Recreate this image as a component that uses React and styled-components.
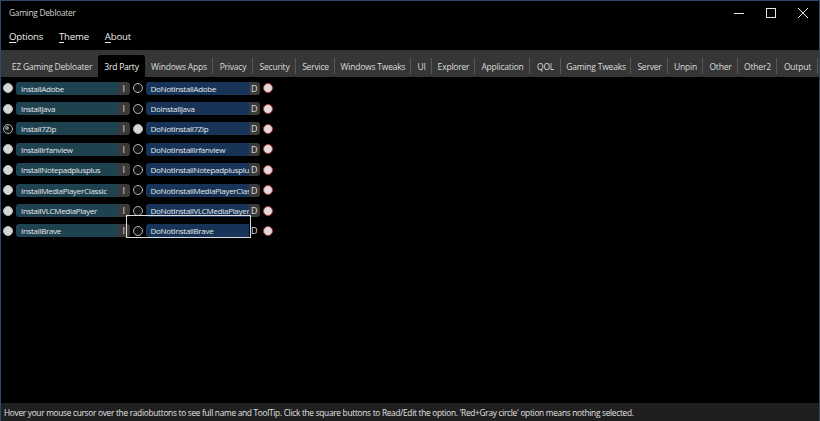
import React from "react";
import styled, { createGlobalStyle, css } from "styled-components";

const Global = createGlobalStyle`
  html, body { margin: 0; padding: 0; background: #000; }
  * { box-sizing: border-box; }
`;

const FONT = `"Open Sans", "Noto Sans", "Liberation Sans", sans-serif`;

const Window = styled.div`
  position: relative;
  width: 820px;
  height: 421px;
  background: #000;
  border: 1px solid #2d4b68;
  border-bottom: 0;
  display: flex;
  flex-direction: column;
  font-family: ${FONT};
  overflow: hidden;
`;

const TitleBar = styled.div`
  height: 23px;
  display: flex;
  align-items: center;
  padding-left: 8px;
  color: #d4d4d4;
  font-size: 8.3px;
  letter-spacing: -0.25px;
`;

const Controls = styled.div`
  margin-left: auto;
  display: flex;
  height: 100%;
`;

const ControlButton = styled.div`
  width: 32px;
  height: 100%;
  display: flex;
  align-items: center;
  justify-content: center;
  color: #e6e6e6;
`;

const MenuBar = styled.div`
  height: 25px;
  display: flex;
  align-items: center;
  gap: 16px;
  padding-left: 8px;
`;

const MenuItem = styled.span`
  color: #ececec;
  font-size: 9.6px;
  letter-spacing: -0.2px;
  & u { text-decoration: underline; text-underline-offset: 2px; }
`;

const TabStrip = styled.div`
  height: 27px;
  margin-top: 1px;
  background: #363636;
  display: flex;
  align-items: flex-end;
  padding-left: 5px;
`;

const Tab = styled.div`
  position: relative;
  height: 22px;
  width: ${(p) => p.$w}px;
  flex: none;
  display: flex;
  align-items: center;
  justify-content: center;
  font-size: 8.5px;
  letter-spacing: -0.2px;
  color: #dcdcdc;
  white-space: nowrap;
  &::after {
    content: "";
    position: absolute;
    right: 0;
    top: 3px;
    height: 16px;
    width: 1px;
    background: #585858;
  }
  ${(p) =>
    p.$active &&
    css`
      background: #000;
      color: #f2f2f2;
      border-radius: 3px 3px 0 0;
      &::after { display: none; }
    `}
  ${(p) => p.$noSep && css`&::after { display: none; }`}
`;

const Content = styled.div`
  padding-top: 1px;
  padding-left: 2px;
  display: flex;
  flex-direction: column;
`;

const Row = styled.div`
  height: 20.4px;
  display: flex;
  align-items: center;
`;

const Radio = styled.span`
  flex: none;
  width: 10px;
  height: 10px;
  border-radius: 50%;
  position: relative;
  ${(p) =>
    p.$kind === "filled" &&
    css`
      background: #d6d6d6;
      border: 1px solid #b8b8b8;
    `}
  ${(p) =>
    (p.$kind === "ring" || p.$kind === "dot") &&
    css`
      background: #141414;
      border: 1.6px solid #b4b4b4;
    `}
  ${(p) =>
    p.$kind === "dot" &&
    css`
      &::after {
        content: "";
        position: absolute;
        left: 1.4px;
        top: 1.4px;
        width: 4px;
        height: 4px;
        border-radius: 50%;
        background: #8a8a8a;
      }
    `}
  ${(p) =>
    p.$kind === "red" &&
    css`
      background: #e2dada;
      border: 1.5px solid #b23c3c;
    `}
`;

const Field = styled.div`
  position: relative;
  display: flex;
  align-items: center;
  margin-left: ${(p) => p.$ml}px;
`;

const Input = styled.div`
  width: ${(p) => p.$w}px;
  height: 13px;
  background: ${(p) => p.$bg};
  border-radius: 3px 0 0 3px;
  color: #e6e6e6;
  font-size: 8px;
  letter-spacing: -0.3px;
  line-height: 13px;
  padding-left: 5px;
  white-space: nowrap;
  overflow: hidden;
`;

const EditButton = styled.div`
  width: 11.5px;
  height: 13px;
  background: ${(p) => (p.$plain ? "transparent" : "#3a3a3a")};
  border-radius: 0 3px 3px 0;
  color: #dedede;
  font-size: 9px;
  line-height: 13px;
  text-align: center;
`;

const FocusRing = styled.div`
  position: absolute;
  left: -7px;
  top: -11px;
  width: 125px;
  height: 23px;
  border: 1.5px solid #dedede;
  pointer-events: none;
`;

const Filler = styled.div`
  flex: 1;
`;

const StatusBar = styled.div`
  height: 18px;
  background: #1f1f1f;
  color: #e2e2e2;
  font-size: 8.3px;
  letter-spacing: -0.28px;
  display: flex;
  align-items: center;
  padding-left: 3px;
  white-space: nowrap;
`;

const tabs = [
  ["EZ Gaming Debloater", 92, false, true],
  ["3rd Party", 47, true],
  ["Windows Apps", 68],
  ["Privacy", 40],
  ["Security", 43],
  ["Service", 39],
  ["Windows Tweaks", 76],
  ["UI", 21],
  ["Explorer", 43],
  ["Application", 55],
  ["QOL", 31],
  ["Gaming Tweaks", 70],
  ["Server", 37],
  ["Unpin", 35],
  ["Other", 35],
  ["Other2", 39],
  ["Output", 41],
];

const rows = [
  ["InstallAdobe", "DoNotInstallAdobe", "filled", "ring"],
  ["InstallJava", "DoInstallJava", "filled", "ring"],
  ["Install7Zip", "DoNotInstall7Zip", "dot", "filled"],
  ["InstallIrfanview", "DoNotInstallIrfanview", "filled", "ring"],
  ["InstallNotepadplusplus", "DoNotInstallNotepadplusplus", "filled", "ring"],
  ["InstallMediaPlayerClassic", "DoNotInstallMediaPlayerClassic", "filled", "ring"],
  ["InstallVLCMediaPlayer", "DoNotInstallVLCMediaPlayer", "filled", "ring"],
  ["InstallBrave", "DoNotInstallBrave", "filled", "ring", true],
];

export default function App() {
  return (
    <>
      <Global />
      <Window>
        <TitleBar>
          Gaming Debloater
          <Controls>
            <ControlButton>
              <svg width="10" height="10" viewBox="0 0 10 10">
                <path d="M0 5.5h10" stroke="currentColor" strokeWidth="1" />
              </svg>
            </ControlButton>
            <ControlButton>
              <svg width="10" height="10" viewBox="0 0 10 10">
                <rect x="0.5" y="0.5" width="9" height="9" fill="none" stroke="currentColor" strokeWidth="1" />
              </svg>
            </ControlButton>
            <ControlButton>
              <svg width="10" height="10" viewBox="0 0 10 10">
                <path d="M0 0L10 10M10 0L0 10" stroke="currentColor" strokeWidth="1" />
              </svg>
            </ControlButton>
          </Controls>
        </TitleBar>
        <MenuBar>
          <MenuItem><u>O</u>ptions</MenuItem>
          <MenuItem><u>T</u>heme</MenuItem>
          <MenuItem><u>A</u>bout</MenuItem>
        </MenuBar>
        <TabStrip>
          {tabs.map(([label, w, active, noSep]) => (
            <Tab key={label} $w={w} $active={active} $noSep={noSep}>
              {label}
            </Tab>
          ))}
        </TabStrip>
        <Content>
          {rows.map(([a, b, ka, kb, focus]) => (
            <Row key={a}>
              <Radio $kind={ka} />
              <Field $ml={3}>
                <Input $w={102} $bg="#1e4250">{a}</Input>
                <EditButton>I</EditButton>
              </Field>
              <Field $ml={3}>
                <Radio $kind={kb} />
                {focus && <FocusRing />}
              </Field>
              <Field $ml={3}>
                <Input $w={103} $bg="#173458">{b}</Input>
                <EditButton $plain={focus}>D</EditButton>
              </Field>
              <Field $ml={3}>
                <Radio $kind="red" />
              </Field>
            </Row>
          ))}
        </Content>
        <Filler />
        <StatusBar>
          Hover your mouse cursor over the radiobuttons to see full name and ToolTip. Click the square buttons to Read/Edit the option. 'Red+Gray circle' option means nothing selected.
        </StatusBar>
      </Window>
    </>
  );
}
